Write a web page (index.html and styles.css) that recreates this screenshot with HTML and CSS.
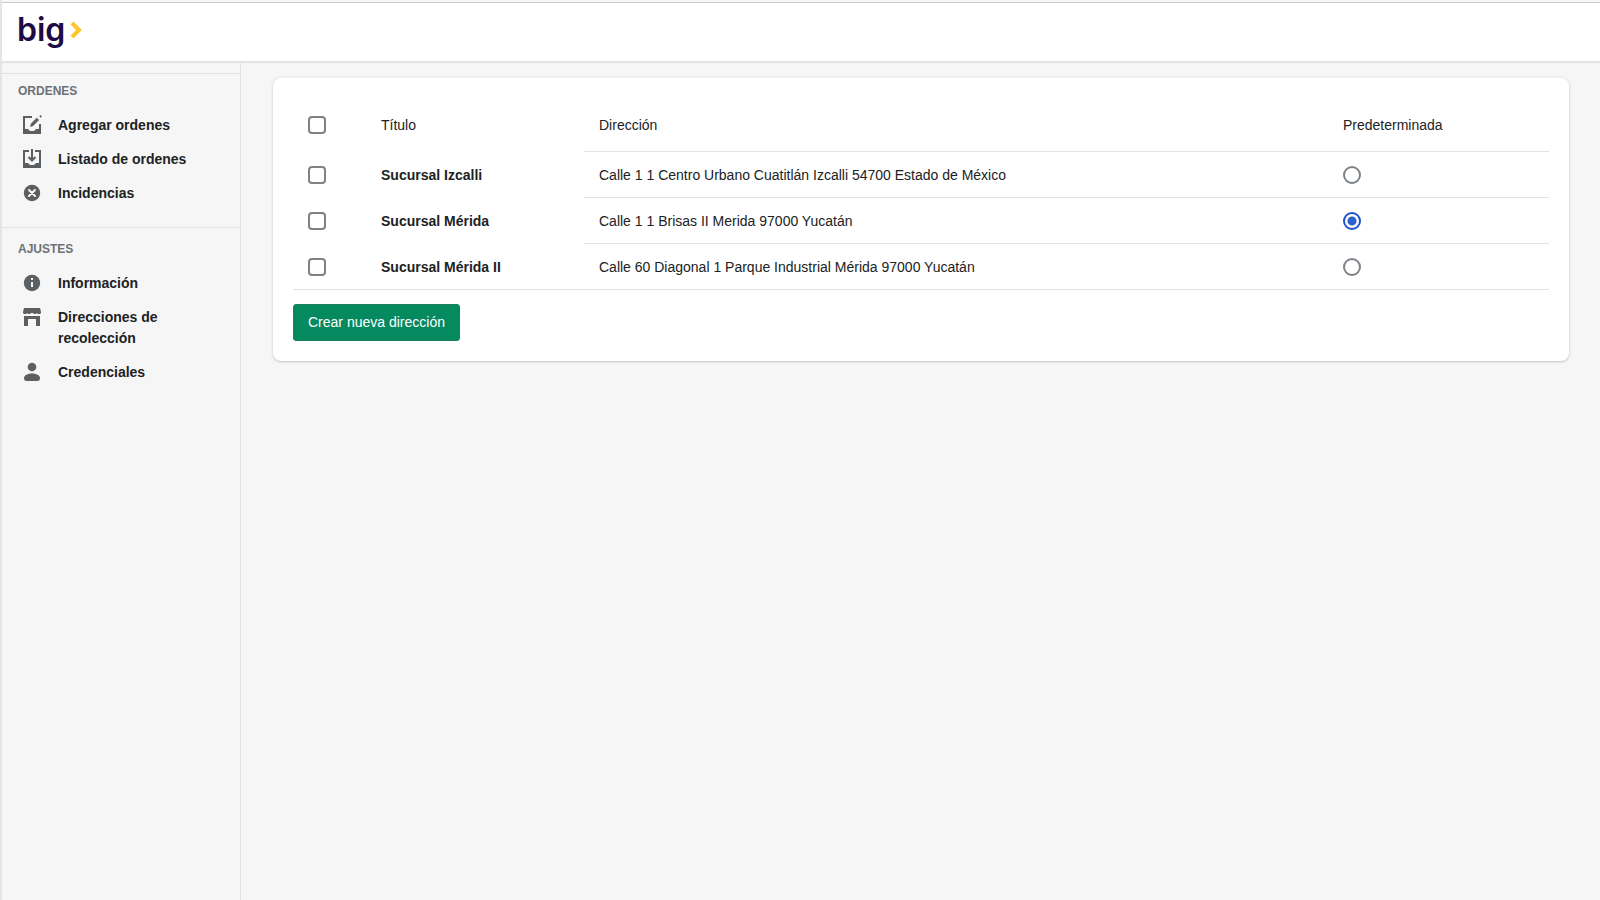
FILE: index.html
```html
<!DOCTYPE html>
<html lang="es">
<head>
<meta charset="utf-8">
<meta name="viewport" content="width=device-width, initial-scale=1">
<title>Direcciones de recolección</title>
<link rel="stylesheet" href="styles.css">
</head>
<body>
<div class="app">
  <header class="topbar">
    <a class="logo" href="#" aria-label="big">
      <span class="logo-text">big</span>
      <svg class="logo-arrow" viewBox="0 0 12 18" aria-hidden="true"><path d="M2 2l7 7-7 7"/></svg>
    </a>
  </header>
  <div class="body">
    <nav class="sidebar" aria-label="Principal">
      <section class="group">
        <h2 class="group-title">ORDENES</h2>
        <a class="item" href="#">
          <svg class="icon" viewBox="0 0 20 20" aria-hidden="true"><path d="M1 1h9v2H3v11h3l2 2h4l2-2h3V9h2v10H1zM17.300 1.300L18.600 0 20 1.400l-1.300 1.300zM14.700 2.700l2.400 2.400-6 6L8 12l.8-3.300z"/></svg>
          <span>Agregar ordenes</span>
        </a>
        <a class="item" href="#">
          <svg class="icon" viewBox="0 0 20 20" aria-hidden="true"><path d="M1 1h6v2H3v11h3l2 2h4l2-2h3V3h-4V1h6v18H1z"/><path class="line" d="M10 0v11M6.500 8l3.500 3.500L13.500 8"/></svg>
          <span>Listado de ordenes</span>
        </a>
        <a class="item" href="#">
          <svg class="icon" viewBox="0 0 20 20" aria-hidden="true"><circle cx="10" cy="10" r="8.200"/><path class="cut" d="M7 7l6 6M13 7l-6 6"/></svg>
          <span>Incidencias</span>
        </a>
      </section>
      <section class="group settings">
        <h2 class="group-title">AJUSTES</h2>
        <a class="item" href="#">
          <svg class="icon" viewBox="0 0 20 20" aria-hidden="true"><circle cx="10" cy="10" r="8.200"/><path class="cut info" d="M10 5v2M10 9v5"/></svg>
          <span>Información</span>
        </a>
        <a class="item" href="#">
          <svg class="icon" viewBox="0 0 20 20" aria-hidden="true"><path d="M2 1h16l1 4v1l-1 1h-2l-1-1-1 1h-2l-1-1h-2l-1 1H6L5 6 4 7H2L1 6V5zM2 9h16v10h-4v-7H6v7H2z"/></svg>
          <span>Direcciones de recolección</span>
        </a>
        <a class="item" href="#">
          <svg class="icon" viewBox="0 0 20 20" aria-hidden="true"><circle cx="10" cy="5" r="4.300"/><path d="M2 16c0-3 4-4.500 8-4.500s8 1.500 8 4.500c0 2-1 3-2.500 3h-11C3 19 2 18 2 16z"/></svg>
          <span>Credenciales</span>
        </a>
      </section>
    </nav>
    <main class="content">
      <section class="card">
        <table class="table">
          <colgroup><col class="col-check"><col class="col-title"><col><col class="col-default"></colgroup>
          <thead>
            <tr>
              <th><input class="check" type="checkbox" aria-label="Seleccionar todas"></th>
              <th scope="col">Título</th>
              <th class="ruled" scope="col">Dirección</th>
              <th class="ruled" scope="col">Predeterminada</th>
            </tr>
          </thead>
          <tbody>
            <tr>
              <td><input class="check" type="checkbox" aria-label="Seleccionar Sucursal Izcalli"></td>
              <td class="name">Sucursal Izcalli</td>
              <td class="ruled">Calle 1 1 Centro Urbano Cuatitlán Izcalli 54700 Estado de México</td>
              <td class="ruled"><input class="radio" type="radio" name="default" aria-label="Predeterminada: Sucursal Izcalli"></td>
            </tr>
            <tr>
              <td><input class="check" type="checkbox" aria-label="Seleccionar Sucursal Mérida"></td>
              <td class="name">Sucursal Mérida</td>
              <td class="ruled">Calle 1 1 Brisas II Merida 97000 Yucatán</td>
              <td class="ruled"><input class="radio" type="radio" name="default" aria-label="Predeterminada: Sucursal Mérida" checked></td>
            </tr>
            <tr class="last">
              <td><input class="check" type="checkbox" aria-label="Seleccionar Sucursal Mérida II"></td>
              <td class="name">Sucursal Mérida II</td>
              <td>Calle 60 Diagonal 1 Parque Industrial Mérida 97000 Yucatán</td>
              <td><input class="radio" type="radio" name="default" aria-label="Predeterminada: Sucursal Mérida II"></td>
            </tr>
          </tbody>
        </table>
        <button class="primary" type="button">Crear nueva dirección</button>
      </section>
    </main>
  </div>
</div>
</body>
</html>
```

FILE: styles.css
```css
* { box-sizing: border-box; }

body {
  margin: 0;
  background: #f6f6f6;
  color: #202223;
  font: 14px/21px "Liberation Sans", Arial, sans-serif;
}

.app {
  min-height: 100vh;
  display: flex;
  flex-direction: column;
  padding-top: 2px;
  border-left: 2px solid #e3e4e4;
}

.topbar {
  display: flex;
  align-items: center;
  height: 60px;
  padding: 0 15px 4px;
  background: #fff;
  border-top: 1px solid #c9c9c9;
  border-bottom: 1px solid #e1e3e3;
  box-shadow: 0 1px 1px #e6e7e7;
}

.logo {
  display: flex;
  align-items: center;
  gap: 5px;
  color: #1d0b45;
  text-decoration: none;
}

.logo-text { font: 600 32px/52px Inter, sans-serif; }

.logo-arrow {
  width: 12px;
  height: 18px;
  fill: none;
  stroke: #ffc425;
  stroke-width: 4;
}

.body { flex: 1; display: flex; }

.sidebar {
  flex: 0 0 239px;
  padding-top: 11px;
  border-right: 1px solid #e1e3e3;
}

.group {
  padding: 7px 16px 17px;
  border-top: 1px solid #e1e3e3;
}

.settings { padding-top: 11px; }

.group-title {
  margin: 0 0 7px;
  color: #6d7175;
  font-size: 12px;
  line-height: 20px;
}

.item {
  display: flex;
  gap: 16px;
  padding: 7px 24px 6px 4px;
  color: #202223;
  font-weight: 700;
  text-decoration: none;
}

.icon {
  flex: none;
  width: 20px;
  height: 20px;
  fill: #5c5f62;
}

.line { fill: none; stroke: #5c5f62; stroke-width: 2; }
.cut { fill: none; stroke: #f6f6f6; stroke-width: 2; stroke-linecap: round; }
.info { stroke-linecap: butt; }

.content { flex: 1; padding: 16px 31px 32px 32px; }

.card {
  padding: 20px;
  background: #fff;
  border-radius: 8px;
  box-shadow: 0 0 4px rgba(23, 24, 24, 0.08), 0 1px 2px rgba(0, 0, 0, 0.16);
}

.table {
  width: 100%;
  margin-bottom: 14px;
  border-collapse: separate;
  border-spacing: 0;
  table-layout: fixed;
}

.col-check { width: 73px; }
.col-title { width: 218px; }
.col-default { width: 221px; }

th, td {
  height: 46px;
  padding: 1px 15px 0;
  text-align: left;
  font-weight: 400;
  border-bottom: 1px solid transparent;
}

th { height: 54px; }
.name { font-weight: 700; }
.ruled, .last td { border-bottom-color: #e1e3e3; }

.check, .radio {
  display: block;
  appearance: none;
  width: 18px;
  height: 18px;
  margin: 0;
  border: 2px solid #7d8287;
  border-radius: 4px;
  background: #fff;
}

.radio { border-radius: 50%; }

.radio:checked {
  border-color: #1f50cf;
  background: radial-gradient(circle, #2c5fd0 0 4px, #fff 5px);
}

.primary {
  display: block;
  height: 37px;
  padding: 0 14px;
  border: 1px solid #1d7f5b;
  border-radius: 3px;
  background: #058a60;
  color: #fff;
  font: inherit;
}
```
